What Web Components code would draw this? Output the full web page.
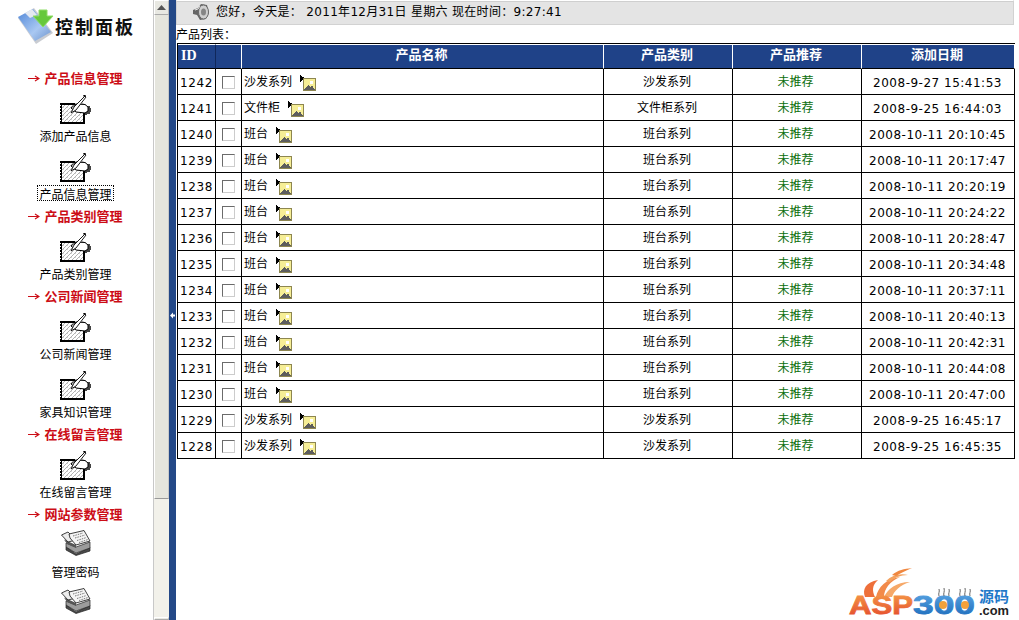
<!DOCTYPE html>
<html lang="zh">
<head>
<meta charset="utf-8">
<title>产品列表</title>
<style>
  html, body { margin: 0; height: 100%; overflow: hidden; background: #fff; }
  body { font: 12px "DejaVu Sans", "Noto Sans CJK SC", sans-serif; color: #000; }
</style>
</head>
<body>
<admin-page>
  <side-bar slot="side">
    <panel-logo></panel-logo>
    <nav-title>产品信息管理</nav-title>
    <nav-item icon="pen">添加产品信息</nav-item>
    <nav-item icon="pen" focused>产品信息管理</nav-item>
    <nav-title>产品类别管理</nav-title>
    <nav-item icon="pen">产品类别管理</nav-item>
    <nav-title>公司新闻管理</nav-title>
    <nav-item icon="pen">公司新闻管理</nav-item>
    <nav-item icon="pen">家具知识管理</nav-item>
    <nav-title>在线留言管理</nav-title>
    <nav-item icon="pen">在线留言管理</nav-item>
    <nav-title>网站参数管理</nav-title>
    <nav-item icon="book">管理密码</nav-item>
    <nav-item icon="book"></nav-item>
  </side-bar>
  <side-scroll slot="scroll"></side-scroll>
  <top-bar>您好，今天是： 2011年12月31日 星期六 现在时间：9:27:41</top-bar>
  <product-table></product-table>
  <site-logo></site-logo>
</admin-page>

<script>
const pageTpl = document.createElement('template');
pageTpl.innerHTML = `
  <style>
    :host { display: flex; width: 1019px; height: 620px; overflow: hidden; }
    .strip {
      width: 7px; background: #234887; flex: none;
      display: flex; align-items: center; justify-content: center;
      padding-top: 10px; box-sizing: border-box;
    }
    main { flex: 1; min-width: 0; display: flex; flex-direction: column; }
  </style>
  <slot name="side"></slot>
  <slot name="scroll"></slot>
  <div class="strip"><svg width="5" height="7" viewBox="0 0 5 7"><path d="M0 3.500 3 0.500V2.500H5V4.500H3V6.500Z" fill="#fff"/></svg></div>
  <main><slot></slot></main>`;

class AdminPage extends HTMLElement {
  constructor() {
    super();
    this.attachShadow({ mode: 'open' });
    this.shadowRoot.appendChild(pageTpl.content.cloneNode(true));
  }
}

const sideTpl = document.createElement('template');
sideTpl.innerHTML = `
  <style>
    :host { display: block; width: 153px; height: 620px; overflow: hidden; flex: none; box-sizing: border-box; padding-right: 2px; }
  </style>
  <slot></slot>`;

class SideBar extends HTMLElement {
  constructor() {
    super();
    this.attachShadow({ mode: 'open' });
    this.shadowRoot.appendChild(sideTpl.content.cloneNode(true));
  }
}

const panelTpl = document.createElement('template');
panelTpl.innerHTML = `
  <style>
    :host { display: flex; height: 68px; box-sizing: border-box; padding: 7px 0 0 17px; align-items: flex-start; }
    svg { flex: none; }
    span {
      margin: 7px 0 0 1px;
      font: 700 18px/24px "Noto Sans CJK SC", sans-serif;
      letter-spacing: 2px; color: #111; white-space: nowrap;
    }
  </style>
  <svg width="37" height="38" viewBox="0 0 37 38">
    <defs><linearGradient id="fold" x1="0" y1="0" x2="1" y2="1">
      <stop offset="0" stop-color="#4f86d8"/><stop offset=".6" stop-color="#a9c8f2"/><stop offset="1" stop-color="#6d93cc"/>
    </linearGradient></defs>
    <path d="M1 11 17 1 36 26 19 37Z" fill="#c9ccd2"/>
    <path d="M1 10 16 2 34 25 18 34Z" fill="url(#fold)"/>
    <path d="M8 6 15 2 20 8 13 11Z" fill="#e4e9f1"/>
    <path d="M22 3H30V9H36L26 20 16 9H22Z" fill="#66c83c" stroke="#8fdc67"/>
  </svg>
  <span>控制面板</span>`;

class PanelLogo extends HTMLElement {
  constructor() {
    super();
    this.attachShadow({ mode: 'open' });
    this.shadowRoot.appendChild(panelTpl.content.cloneNode(true));
  }
}

const navTitleTpl = document.createElement('template');
navTitleTpl.innerHTML = `
  <style>
    :host {
      display: flex; height: 22px; box-sizing: border-box; padding-bottom: 2px;
      align-items: center; justify-content: center;
      color: #cc0d16; font: 700 13px/20px "Noto Sans CJK SC", sans-serif; white-space: nowrap;
    }
    svg { margin-right: 4px; flex: none; }
  </style>
  <svg width="12" height="7" viewBox="0 0 12 7"><path d="M0 3.500H10M7 1 11 3.500 7 6" fill="none" stroke="#cc0d16" stroke-width="1.200"/></svg>
  <slot></slot>`;

class NavTitle extends HTMLElement {
  constructor() {
    super();
    this.attachShadow({ mode: 'open' });
    this.shadowRoot.appendChild(navTitleTpl.content.cloneNode(true));
  }
}

const penIcon = `
  <svg width="33" height="30" viewBox="0 0 33 30" shape-rendering="crispEdges">
    <defs>
      <pattern id="hatch" width="4" height="4" patternUnits="userSpaceOnUse">
        <rect width="4" height="4" fill="#fff"/>
        <path d="M0 3H1V4H0ZM1 2H2V3H1ZM2 1H3V2H2ZM3 0H4V1H3Z" fill="#b2b2b2"/>
        <path d="M0 0H1V1H0Z" fill="#d6d6d6"/>
      </pattern>
      <pattern id="dots" width="3" height="3" patternUnits="userSpaceOnUse">
        <rect width="3" height="3" fill="#000"/><rect x="1" y="1" width="1" height="1" fill="#fff"/>
      </pattern>
    </defs>
    <path d="M1 8H27V18H25V28H1Z" fill="url(#hatch)"/>
    <path d="M1 8H3V28H1ZM1 8H16V9.500H1Z" fill="url(#dots)"/>
    <path d="M1 27H25V29H1ZM24 18H26V29H24Z" fill="#000"/>
    <path d="M28 11H31V13H32V17H31V19H28V20H26V12H28Z" fill="#444"/>
    <g shape-rendering="auto">
      <path d="M17 9 26 9.500 29 12 29 16 26 18 17 17 12 13Z" fill="#fff" stroke="#000"/>
      <path d="M12 18 15 12 26 1 27 2 17 15Z" fill="#fff" stroke="#000" stroke-width=".9"/>
      <path d="M24 1 27 0" stroke="#000"/>
    </g>
  </svg>`;

const bookIcon = `
  <svg width="30" height="26" viewBox="0 0 30 26">
    <path d="M5 17 15 24 29 17.500V21L15 25.500 5 20Z" fill="#4a4a4a" stroke="#222" stroke-width=".7"/>
    <path d="M5 13 15 17 29 12V18L15 23 5 17Z" fill="#9c9c9c" stroke="#222" stroke-width=".7"/>
    <path d="M3 9.500 15 15 15 18 6 14Z" fill="#555"/>
    <path d="M.5 5 7 2 15 10 7 12Z" fill="#ececec" stroke="#111" stroke-width=".8"/>
    <path d="M8 4 23 .5 29 11 15 15 9 8Z" fill="#f4f4f4" stroke="#111" stroke-width=".8"/>
    <path d="M12 6 22 3M14 8 24 5M16 10.500 25.500 7.500M18 12.500 27 9.500" stroke="#777" stroke-dasharray="1.500 1" fill="none"/>
  </svg>`;

const navItemTpl = document.createElement('template');
navItemTpl.innerHTML = `
  <style>
    :host {
      display: flex; flex-direction: column; align-items: center;
      height: 58px; box-sizing: border-box; padding-top: 5px;
      font: 12px/14px "Noto Sans CJK SC", sans-serif; color: #000; white-space: nowrap;
    }
    .icon { height: 33px; display: flex; align-items: flex-start; }
    .book { margin-top: -1px; height: 34px; padding-top: 0; }
    .label { border: 1px solid transparent; line-height: 14px; }
    :host([focused]) .label { outline: 1px dotted #000; outline-offset: 0; border-width: 0 1px; padding: 1px 0 0; height: 13px; }
  </style>
  <div class="icon"></div>
  <div class="label"><slot></slot></div>`;

class NavItem extends HTMLElement {
  constructor() {
    super();
    this.attachShadow({ mode: 'open' });
    this.shadowRoot.appendChild(navItemTpl.content.cloneNode(true));
  }

  connectedCallback() {
    const box = this.shadowRoot.querySelector('.icon');
    if (this.getAttribute('icon') === 'book') {
      box.classList.add('book');
      box.innerHTML = bookIcon;
    } else {
      box.innerHTML = penIcon;
    }
  }
}

const scrollTpl = document.createElement('template');
scrollTpl.innerHTML = `
  <style>
    :host {
      display: flex; flex-direction: column; width: 16px; height: 620px; flex: none;
      box-sizing: border-box; background: #f2f1ea; border-left: 1px solid #c8c8c8;
    }
    .btn {
      height: 15px; flex: none; box-sizing: border-box; background: #e8e8e2;
      border: 1px solid #fff; border-right-color: #bbb; border-bottom-color: #aaa;
      display: flex; align-items: center; justify-content: center;
    }
    .thumb {
      height: 484px; flex: none; box-sizing: border-box; background: #e5e5dd;
      border-left: 1px solid #fff; border-right: 1px solid #c9c9c9; border-bottom: 1px solid #999;
    }
    .rest { flex: 1; }
    .end { height: 3px; }
  </style>
  <div class="btn"><svg width="9" height="5" viewBox="0 0 9 5"><path d="M4.500 0 9 5H0Z" fill="#555"/></svg></div>
  <div class="thumb"></div>
  <div class="rest"></div>
  <div class="btn end"></div>`;

class SideScroll extends HTMLElement {
  constructor() {
    super();
    this.attachShadow({ mode: 'open' });
    this.shadowRoot.appendChild(scrollTpl.content.cloneNode(true));
  }
}

const topTpl = document.createElement('template');
topTpl.innerHTML = `
  <style>
    :host {
      display: flex; align-items: center; gap: 6px; flex: none;
      width: 838px; height: 25px; box-sizing: border-box; padding: 0 0 1px 15px;
      background: #e4e4e4; border: 1px solid #d2d2d2; border-top-color: #fff;
      box-shadow: inset 0 1px 0 #cfcfcf;
      font: 12px/16px "DejaVu Sans", "Noto Sans CJK SC", sans-serif; white-space: pre;
      letter-spacing: .31px;
    }
    svg { flex: none; }
  </style>
  <svg width="18" height="18" viewBox="0 0 18 18">
    <path d="M1 7 6 5 9 1 15 2 17 10 14 16 8 17 5 12 1 11Z" fill="#666"/>
    <ellipse cx="11.500" cy="9" rx="5" ry="7" fill="#cfcfcf" stroke="#6a6a6a"/>
    <ellipse cx="11.500" cy="9" rx="2.500" ry="3.500" fill="#858585"/>
    <path d="M3 7 6 6 8 3" stroke="#e6e6e6" fill="none"/>
  </svg>
  <span><slot></slot></span>`;

class TopBar extends HTMLElement {
  constructor() {
    super();
    this.attachShadow({ mode: 'open' });
    this.shadowRoot.appendChild(topTpl.content.cloneNode(true));
  }
}

const products = [
  [1242, '沙发系列', '沙发系列', '2008-9-27 15:41:53'],
  [1241, '文件柜', '文件柜系列', '2008-9-25 16:44:03'],
  [1240, '班台', '班台系列', '2008-10-11 20:10:45'],
  [1239, '班台', '班台系列', '2008-10-11 20:17:47'],
  [1238, '班台', '班台系列', '2008-10-11 20:20:19'],
  [1237, '班台', '班台系列', '2008-10-11 20:24:22'],
  [1236, '班台', '班台系列', '2008-10-11 20:28:47'],
  [1235, '班台', '班台系列', '2008-10-11 20:34:48'],
  [1234, '班台', '班台系列', '2008-10-11 20:37:11'],
  [1233, '班台', '班台系列', '2008-10-11 20:40:13'],
  [1232, '班台', '班台系列', '2008-10-11 20:42:31'],
  [1231, '班台', '班台系列', '2008-10-11 20:44:08'],
  [1230, '班台', '班台系列', '2008-10-11 20:47:00'],
  [1229, '沙发系列', '沙发系列', '2008-9-25 16:45:17'],
  [1228, '沙发系列', '沙发系列', '2008-9-25 16:45:35']
];

const tableTpl = document.createElement('template');
tableTpl.innerHTML = `
  <style>
    :host { display: block; flex: none; margin-left: 1px; font: 12px/18px "Noto Sans CJK SC", sans-serif; }
    .cap { height: 18px; margin-left: -1px; }
    table {
      width: 837px; table-layout: fixed; border-collapse: separate; border-spacing: 0;
      border-top: 1px solid #000; border-left: 1px solid #000;
    }
    th, td { box-sizing: border-box; padding: 0; border-right: 1px solid #000; border-bottom: 1px solid #000; text-align: center; }
    th {
      height: 25px; background: #1f4288; color: #fff; font-weight: 700; font-size: 13px;
      padding: 0 2px 5px 0;
      border-top: 1px solid #fff; border-right-color: #fff;
    }
    th:first-child { border-right-color: #10275a; }
    th:first-child {
      text-align: left; padding: 0 0 1px 3px;
      font: 700 14px "Liberation Serif", serif;
    }
    td { height: 26px; padding: 0 2px 2px 0; }
    td.id { text-align: right; padding: 2px 2px 0 0; font-family: "DejaVu Sans", sans-serif; letter-spacing: .6px; }
    td.name { padding: 0 0 2px; }
    td.name > div { display: flex; align-items: center; padding-left: 2px; }
    td.name svg { margin: 3px 0 -2px 8px; flex: none; }
    td.rec { color: #0b6e0b; padding-right: 3px; }
    td.date { font-family: "DejaVu Sans", sans-serif; padding: 2px 1px 0 0; letter-spacing: .5px; }
    input {
      appearance: none; display: block; width: 13px; height: 13px; margin: 2px auto 0 6px;
      box-sizing: border-box; background: #fff;
      border: 1px solid #6b6b6b; border-right-color: #ccc; border-bottom-color: #ccc;
    }
    td.chk { padding: 0; }
  </style>
  <div class="cap">产品列表：</div>
  <table>
    <colgroup><col style="width:38px"><col style="width:26px"><col style="width:362px"><col style="width:129px"><col style="width:129px"><col style="width:153px"></colgroup>
    <thead><tr><th>ID</th><th></th><th>产品名称</th><th>产品类别</th><th>产品推荐</th><th>添加日期</th></tr></thead>
    <tbody></tbody>
  </table>`;

const pictureIcon = `
  <svg width="16" height="16" viewBox="0 0 16 16" shape-rendering="crispEdges">
    <path d="M0 0 5 3.500 0 7Z" fill="#000"/>
    <rect x="3.500" y="3.500" width="12" height="12" fill="#f6ee96" stroke="#8d8650"/>
    <path d="M4 15 8 10 10 12 12 10 15 15Z" fill="#5d5d5d"/>
    <rect x="10" y="6" width="3" height="3" fill="#fff"/>
  </svg>`;

class ProductTable extends HTMLElement {
  constructor() {
    super();
    this.attachShadow({ mode: 'open' });
    this.shadowRoot.appendChild(tableTpl.content.cloneNode(true));
  }

  connectedCallback() {
    const body = this.shadowRoot.querySelector('tbody');
    body.innerHTML = products.map(p => `
      <tr>
        <td class="id">${p[0]}</td>
        <td class="chk"><input type="checkbox"></td>
        <td class="name"><div><span>${p[1]}</span>${pictureIcon}</div></td>
        <td>${p[2]}</td>
        <td class="rec">未推荐</td>
        <td class="date">${p[3]}</td>
      </tr>`).join('');
  }
}

const logoTpl = document.createElement('template');
logoTpl.innerHTML = `
  <style>
    :host { display: block; margin: auto 8px 0 auto; width: 163px; height: 53px; flex: none; }
    svg { display: block; }
    text { font-family: "Liberation Sans", "Noto Sans CJK SC", sans-serif; font-weight: 700; }
  </style>
  <svg width="163" height="53" viewBox="0 0 163 53">
    <defs>
      <linearGradient id="asp" x1="0" y1="0" x2="0" y2="1"><stop offset="0" stop-color="#f7a24a"/><stop offset="1" stop-color="#e2432a"/></linearGradient>
      <linearGradient id="num" x1="0" y1="0" x2="0" y2="1"><stop offset="0" stop-color="#5fa9e6"/><stop offset="1" stop-color="#1667b8"/></linearGradient>
    </defs>
    <path d="M17 30C14 22 18 15 30 13 24 18 24 24 27 30Z" fill="#ee6f3a"/>
    <path d="M28 30C30 20 38 12 52 10 42 14 36 22 36 30Z" fill="#f28a4a"/>
    <path d="M36 30C40 22 48 15 62 15 52 18 46 24 44 30Z" fill="#f6a868"/>
    <path d="M38 14C44 8 52 6 60 8 52 8 46 11 42 15Z" fill="#f3a25f"/>
    <path d="M44 8C50 3 56 2 64 1 58 4 52 6 48 9Z" fill="#f0873f"/>
    <text x="1" y="47" font-size="26" textLength="64" lengthAdjust="spacingAndGlyphs" fill="url(#asp)" stroke="url(#asp)" stroke-width=".8">ASP</text>
    <text x="65" y="47" font-size="26" textLength="62" lengthAdjust="spacingAndGlyphs" fill="url(#num)" stroke="url(#num)" stroke-width=".8">300</text>
    <circle cx="95" cy="38" r="4" fill="#f3a13c"/><circle cx="117" cy="38" r="4" fill="#f3a13c"/>
    <path d="M91 29C90 26 92 25 91 22M96 29C95 26 97 25 96 21M101 29C100 26 102 25 101 22M112 29C111 26 113 25 112 22M117 29C116 26 118 25 117 21M122 29C121 26 123 25 122 22" stroke="#666" fill="none"/>
    <text x="131" y="35" font-size="15" textLength="30" lengthAdjust="spacingAndGlyphs" fill="#1f79c9">源码</text>
    <text x="131" y="48" font-size="12" textLength="30" lengthAdjust="spacingAndGlyphs" fill="#222">.com</text>
  </svg>`;

class SiteLogo extends HTMLElement {
  constructor() {
    super();
    this.attachShadow({ mode: 'open' });
    this.shadowRoot.appendChild(logoTpl.content.cloneNode(true));
  }
}

customElements.define('admin-page', AdminPage);
customElements.define('side-bar', SideBar);
customElements.define('panel-logo', PanelLogo);
customElements.define('nav-title', NavTitle);
customElements.define('nav-item', NavItem);
customElements.define('side-scroll', SideScroll);
customElements.define('top-bar', TopBar);
customElements.define('product-table', ProductTable);
customElements.define('site-logo', SiteLogo);
</script>
</body>
</html>
